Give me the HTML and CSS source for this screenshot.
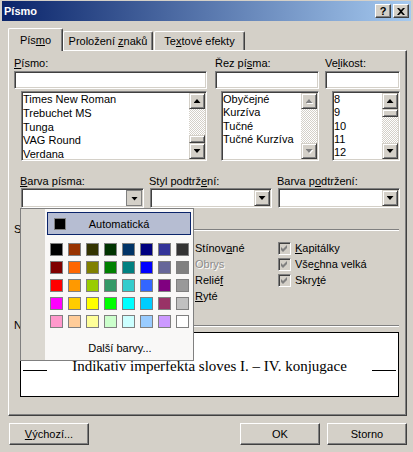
FILE: index.html
```html
<!DOCTYPE html>
<html lang="cs">
<head>
<meta charset="utf-8">
<title>Písmo</title>
<link rel="stylesheet" href="styles.css">
</head>
<body>
<div class="window">
  <div class="titlebar">
    <span class="title">Písmo</span>
    <div class="caption-btns">
      <span class="cbtn">?</span>
      <span class="cbtn"><svg width="8" height="7" viewBox="0 0 8 7"><path d="M0 0h2l2 2 2-2h2L5 3.5 8 7H6L4 5 2 7H0l3-3.5z" fill="#000"/></svg></span>
    </div>
  </div>

  <div class="tabs">
    <div class="tab tab-active">Pís<u>m</u>o</div>
    <div class="tab tab-spacing">Proložení <u>z</u>naků</div>
    <div class="tab tab-effects">Te<u>x</u>tové efekty</div>
  </div>

  <div class="panel">
    <div class="font-row">
      <div class="fcol fcol-font">
        <div class="label"><u>P</u>ísmo:</div>
        <div class="edit"></div>
        <div class="list">
          <ul class="items items-font">
            <li>Times New Roman</li>
            <li>Trebuchet MS</li>
            <li>Tunga</li>
            <li>VAG Round</li>
            <li>Verdana</li>
          </ul>
          <div class="vscroll">
            <span class="sbtn"><i class="arr-up"></i></span>
            <span class="track track-end"><span class="thumb"></span></span>
            <span class="sbtn"><i class="arr-down"></i></span>
          </div>
        </div>
      </div>
      <div class="fcol fcol-style">
        <div class="label">Řez pí<u>s</u>ma:</div>
        <div class="edit"></div>
        <div class="list">
          <ul class="items">
            <li>Obyčejné</li>
            <li>Kurzíva</li>
            <li>Tučné</li>
            <li>Tučné Kurzíva</li>
          </ul>
          <div class="vscroll">
            <span class="sbtn"><b class="dis"><i class="arr-up"></i></b></span>
            <span class="track"></span>
            <span class="sbtn"><b class="dis"><i class="arr-down"></i></b></span>
          </div>
        </div>
      </div>
      <div class="fcol fcol-size">
        <div class="label">Ve<u>l</u>ikost:</div>
        <div class="edit"></div>
        <div class="list">
          <ul class="items">
            <li>8</li>
            <li>9</li>
            <li>10</li>
            <li>11</li>
            <li>12</li>
          </ul>
          <div class="vscroll">
            <span class="sbtn"><i class="arr-up"></i></span>
            <span class="track"><span class="thumb"></span></span>
            <span class="sbtn"><i class="arr-down"></i></span>
          </div>
        </div>
      </div>
    </div>

    <div class="combo-row">
      <div class="ccol ccol-wide">
        <div class="label"><u>B</u>arva písma:</div>
        <div class="combo combo-open"><span class="dd dd-pressed"><i class="arr-down"></i></span></div>
        <div class="palette">
          <div class="pal-strip"></div>
          <div class="pal-main">
            <div class="auto"><span class="auto-sw"></span><span class="auto-text">Automatická</span></div>
            <div class="swatches">
              <span class="sw" style="background:#000000"></span>
              <span class="sw" style="background:#993300"></span>
              <span class="sw" style="background:#333300"></span>
              <span class="sw" style="background:#003300"></span>
              <span class="sw" style="background:#003366"></span>
              <span class="sw" style="background:#000080"></span>
              <span class="sw" style="background:#333399"></span>
              <span class="sw" style="background:#333333"></span>
              <span class="sw" style="background:#800000"></span>
              <span class="sw" style="background:#ff6600"></span>
              <span class="sw" style="background:#808000"></span>
              <span class="sw" style="background:#008000"></span>
              <span class="sw" style="background:#008080"></span>
              <span class="sw" style="background:#0000ff"></span>
              <span class="sw" style="background:#666699"></span>
              <span class="sw" style="background:#808080"></span>
              <span class="sw" style="background:#ff0000"></span>
              <span class="sw" style="background:#ff9900"></span>
              <span class="sw" style="background:#99cc00"></span>
              <span class="sw" style="background:#339966"></span>
              <span class="sw" style="background:#33cccc"></span>
              <span class="sw" style="background:#3366ff"></span>
              <span class="sw" style="background:#800080"></span>
              <span class="sw" style="background:#999999"></span>
              <span class="sw" style="background:#ff00ff"></span>
              <span class="sw" style="background:#ffcc00"></span>
              <span class="sw" style="background:#ffff00"></span>
              <span class="sw" style="background:#00ff00"></span>
              <span class="sw" style="background:#00ffff"></span>
              <span class="sw" style="background:#00ccff"></span>
              <span class="sw" style="background:#993366"></span>
              <span class="sw" style="background:#c0c0c0"></span>
              <span class="sw" style="background:#ff99cc"></span>
              <span class="sw" style="background:#ffcc99"></span>
              <span class="sw" style="background:#ffff99"></span>
              <span class="sw" style="background:#ccffcc"></span>
              <span class="sw" style="background:#ccffff"></span>
              <span class="sw" style="background:#99ccff"></span>
              <span class="sw" style="background:#cc99ff"></span>
              <span class="sw" style="background:#ffffff"></span>
            </div>
            <div class="more">Další barvy...</div>
          </div>
        </div>
      </div>
      <div class="ccol">
        <div class="label">Styl podtrž<u>e</u>ní:</div>
        <div class="combo"><span class="dd"><i class="arr-down"></i></span></div>
      </div>
      <div class="ccol">
        <div class="label">Barva p<u>o</u>dtržení:</div>
        <div class="combo"><span class="dd"><i class="arr-down"></i></span></div>
      </div>
    </div>

    <div class="group-head group-effects">
      <span>Styly</span><span class="rule"></span>
    </div>
    <div class="effects">
      <div class="cb"><span class="box"></span><span>Přeškrtnuté</span></div>
      <div class="cb"><span class="box"></span><span>Dvojité přeškrtnutí</span></div>
      <div class="cb"><span class="box"></span><span>Horní index</span></div>
      <div class="cb"><span class="box"></span><span>Dolní index</span></div>
      <div class="cb"><span class="box"></span><span>Stínov<u>a</u>né</span></div>
      <div class="cb cb-disabled"><span class="box"></span><span>Obrys</span></div>
      <div class="cb"><span class="box"></span><span>Relié<u>f</u></span></div>
      <div class="cb"><span class="box"></span><span><u>R</u>yté</span></div>
      <div class="cb"><span class="box box-grey"><svg width="11" height="11" viewBox="0 0 11 11"><path d="M2 4l2 2 4-4v3l-4 4-2-2z" fill="#808080"/></svg></span><span><u>K</u>apitálky</span></div>
      <div class="cb"><span class="box box-grey"><svg width="11" height="11" viewBox="0 0 11 11"><path d="M2 4l2 2 4-4v3l-4 4-2-2z" fill="#808080"/></svg></span><span>Vše<u>c</u>hna velká</span></div>
      <div class="cb"><span class="box box-grey"><svg width="11" height="11" viewBox="0 0 11 11"><path d="M2 4l2 2 4-4v3l-4 4-2-2z" fill="#808080"/></svg></span><span>Skry<u>t</u>é</span></div>
    </div>

    <div class="group-head group-preview">
      <span>Náhled</span><span class="rule"></span>
    </div>
    <div class="preview">
      <div class="preview-row">
        <span class="stub"></span>
        <span class="preview-text">Indikativ imperfekta sloves I. – IV. konjugace</span>
        <span class="stub"></span>
      </div>
    </div>
  </div>

  <div class="buttons">
    <span class="btn"><span><u>V</u>ýchozí...</span></span>
    <span class="spacer"></span>
    <span class="btn">OK</span>
    <span class="btn btn-last">Storno</span>
  </div>
</div>
</body>
</html>
```

FILE: styles.css
```css
* { box-sizing: border-box; }
html, body { margin: 0; padding: 0; }
body {
  background: #d4d0c8;
  font-family: "Liberation Sans", Arial, sans-serif;
  font-size: 11px;
  color: #000;
}
ul { margin: 0; padding: 0; list-style: none; }
u { text-decoration: underline; text-underline-offset: 1px; }

.window {
  width: 413px;
  height: 452px;
  background: #d4d0c8;
  position: relative;
  overflow: hidden;
}

/* title bar */
.titlebar {
  height: 20px;
  margin: 1px 2px 0 2px;
  padding: 0 2px 0 2px;
  background: linear-gradient(to right, #0a246a, #a6caf0);
  display: flex;
  align-items: center;
  justify-content: space-between;
}
.title { color: #fff; font-weight: bold; font-size: 11px; }
.caption-btns { display: flex; gap: 2px; }
.cbtn {
  width: 16px;
  height: 14px;
  background: #d4d0c8;
  border: 1px solid;
  border-color: #fff #404040 #404040 #fff;
  box-shadow: inset -1px -1px #808080;
  display: flex;
  align-items: center;
  justify-content: center;
  font-weight: bold;
  font-size: 11px;
  line-height: 1;
}

/* tabs */
.tabs {
  display: flex;
  align-items: flex-end;
  height: 22px;
  margin-top: 7px;
  padding-left: 8px;
  position: relative;
  z-index: 1;
}
.tab {
  height: 19px;
  border: 1px solid;
  border-bottom: 0;
  border-color: #fff #404040 #fff #fff;
  box-shadow: inset -1px 0 #808080;
  border-radius: 2px 2px 0 0;
  text-align: center;
  padding-top: 3px;
  line-height: 13px;
  background: #d4d0c8;
  white-space: nowrap;
}
.tab-active { width: 55px; height: 23px; margin-bottom: -1px; padding-top: 5px; }
.tab-spacing { width: 90px; }
.tab-effects { width: 91px; margin-left: 1px; }

/* panel */
.panel {
  margin-left: 8px;
  width: 399px;
  height: 366px;
  border: 1px solid;
  border-color: #fff #404040 #404040 #fff;
  box-shadow: inset -1px -1px #808080;
  padding: 6px 0 0 5px;
}
.label { height: 13px; line-height: 13px; white-space: nowrap; }

.font-row { display: flex; }
.fcol { display: flex; flex-direction: column; }
.fcol-font { width: 193px; }
.fcol-style { width: 104px; margin-left: 8px; }
.fcol-size { width: 75px; margin-left: 6px; }

.edit {
  height: 18px;
  margin-top: 1px;
  background: #fff;
  border: 1px solid;
  border-color: #808080 #fff #fff #808080;
  box-shadow: inset 1px 1px #404040, inset -1px -1px #d4d0c8;
}
.list {
  height: 70px;
  margin-top: 2px;
  margin-left: 7px;
  background: #fff;
  border: 1px solid;
  border-color: #808080 #fff #fff #808080;
  box-shadow: inset 1px 1px #404040, inset -1px -1px #d4d0c8;
  padding: 1px;
  display: flex;
}
.fcol-style .list { margin-left: 6px; }
.items { flex: 1; overflow: hidden; }
.items li { height: 13.3px; line-height: 12px; white-space: nowrap; }
.items-font li { height: 13.8px; }

.vscroll { width: 16px; display: flex; flex-direction: column; }
.sbtn, .thumb, .dd {
  background: #d4d0c8;
  border: 1px solid;
  border-color: #d4d0c8 #404040 #404040 #d4d0c8;
  box-shadow: inset 1px 1px #fff, inset -1px -1px #808080;
}
.sbtn {
  height: 16px;
  display: flex;
  align-items: center;
  justify-content: center;
}
.thumb { display: block; height: 8px; }
.track {
  flex: 1;
  background: repeating-conic-gradient(#fff 0 25%, #d4d0c8 0 50%) 0 0 / 2px 2px;
  display: flex;
  flex-direction: column;
}
.track-end { justify-content: flex-end; }

.arr-up, .arr-down { display: block; width: 7px; height: 4px; background: #000; }
.arr-up { clip-path: polygon(50% 0, 100% 100%, 0 100%); }
.arr-down { clip-path: polygon(0 0, 100% 0, 50% 100%); }
.dis { display: block; filter: drop-shadow(1px 1px 0 #fff); }
.dis .arr-up, .dis .arr-down { background: #808080; }

/* combos */
.combo-row { display: flex; gap: 6px; margin-top: 14px; margin-left: 7px; }
.ccol { display: flex; flex-direction: column; position: relative; width: 122px; }
.ccol-wide { width: 123px; }
.ccol .label { margin-left: -1px; }
.combo {
  height: 20px;
  background: #fff;
  border: 1px solid;
  border-color: #808080 #fff #fff #808080;
  box-shadow: inset 1px 1px #404040, inset -1px -1px #d4d0c8;
  padding: 1px;
  display: flex;
  justify-content: flex-end;
}
.dd { width: 16px; height: 16px; display: flex; align-items: center; justify-content: center; }
.dd-pressed { border: 1px solid #808080; box-shadow: none; padding: 1px 0 0 1px; }

/* colour palette popup */
.palette {
  position: absolute;
  left: -1px;
  top: 100%;
  width: 174px;
  height: 153px;
  border: 1px solid #808080;
  background: #f9f8f7;
  display: flex;
  z-index: 5;
}
.pal-strip { width: 24px; background: #dbd8d1; }
.pal-main { flex: 1; padding: 3px 0 0 2px; display: flex; flex-direction: column; }
.auto {
  width: 144px;
  height: 23px;
  border: 1px solid #0a246a;
  background: #b6bdd2;
  display: grid;
  grid-template-columns: 12px 1fr 12px;
  align-items: center;
  padding: 0 6px;
}
.auto-sw { width: 12px; height: 12px; background: #000; border: 1px solid #808080; }
.auto-text { text-align: center; }
.swatches {
  display: grid;
  grid-template-columns: repeat(8, 13px);
  grid-auto-rows: 13px;
  gap: 5px;
  margin: 8px 0 0 3px;
}
.sw { border: 1px solid #808080; }
.more { text-align: center; margin-top: 14px; line-height: 13px; }

/* group headers */
.group-head { display: flex; align-items: center; height: 13px; line-height: 13px; }
.group-effects { margin-top: 15px; }
.group-preview { margin-top: 15px; }
.rule {
  flex: 1;
  height: 2px;
  border-top: 1px solid #808080;
  border-bottom: 1px solid #fff;
  margin: 0 7px 0 4px;
}

/* effects */
.effects {
  display: grid;
  grid-template-columns: 158px 100px 1fr;
  grid-template-rows: repeat(4, 16px);
  grid-auto-flow: column;
  margin: 4px 0 0 6px;
}
.cb { display: flex; align-items: center; gap: 4px; white-space: nowrap; }
.box {
  width: 13px;
  height: 13px;
  flex: none;
  background: #fff;
  border: 1px solid;
  border-color: #808080 #fff #fff #808080;
  box-shadow: inset 1px 1px #404040, inset -1px -1px #d4d0c8;
  display: flex;
}
.box-grey { background: #d4d0c8; }
.cb-disabled { color: #8c8c8c; text-shadow: 1px 1px 0 #fff; }

/* preview */
.preview {
  margin-left: 6px;
  width: 379px;
  height: 65px;
  border: 1px solid #000;
  background: #fff;
  display: flex;
  align-items: center;
  padding: 3px 1px 0;
}
.preview-row { flex: 1; display: flex; align-items: baseline; }
.stub { width: 24px; height: 1px; background: #000; margin: 0 1px; }
.preview-text {
  flex: 1;
  text-align: center;
  font-family: "Liberation Serif", "Times New Roman", serif;
  font-size: 15px;
  line-height: 18px;
  white-space: nowrap;
}

/* buttons */
.buttons { display: flex; margin-top: 7px; padding: 0 6px 0 9px; }
.btn {
  width: 80px;
  height: 22px;
  border: 1px solid;
  border-color: #fff #404040 #404040 #fff;
  box-shadow: inset -1px -1px #808080;
  display: flex;
  align-items: center;
  justify-content: center;
}
.spacer { flex: 1; }
.btn-last { margin-left: 7px; }
```
